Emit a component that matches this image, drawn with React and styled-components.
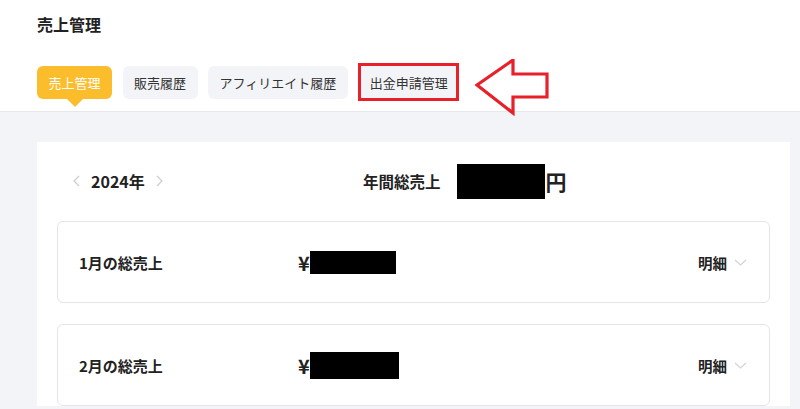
import React from 'react'
import styled, { createGlobalStyle } from 'styled-components'

const GlobalStyle = createGlobalStyle`
  html, body {
    margin: 0;
    padding: 0;
    background: #f3f4f8;
    font-family: "Noto Sans CJK JP", "Noto Sans", sans-serif;
    color: #222;
  }
  * { box-sizing: border-box; }
`

const tabs = ['売上管理', '販売履歴', 'アフィリエイト履歴', '出金申請管理']
const months = ['1月の総売上', '2月の総売上']

function ArrowMark() {
  return (
    <svg width="76" height="58" viewBox="0 0 76 58">
      <polygon
        points="2,26 38,1 38,15 72,15 72,38 38,38 38,54"
        fill="none"
        stroke="#e8202a"
        strokeWidth="3.2"
        strokeLinejoin="miter"
      />
    </svg>
  )
}

function Chevron({ dir }) {
  const pts = dir === 'left' ? '6,1 1,6 6,11' : '1,1 6,6 1,11'
  return (
    <svg width="7" height="12" viewBox="0 0 7 12">
      <polyline points={pts} fill="none" stroke="#c9cdd4" strokeWidth="1.2" />
    </svg>
  )
}

function App() {
  return (
    <>
      <GlobalStyle />
      <Header>
        <PageTitle>売上管理</PageTitle>
        <TabRow>
          {tabs.map((t, i) => (
            <Tab key={t} active={i === 0} marked={i === 3}>{t}</Tab>
          ))}
          <ArrowWrap><ArrowMark /></ArrowWrap>
        </TabRow>
      </Header>
      <Body>
        <Panel>
          <YearRow>
            <YearNav>
              <Chevron dir="left" />
              <YearLabel>2024年</YearLabel>
              <Chevron dir="right" />
            </YearNav>
            <Total>
              <TotalLabel>年間総売上</TotalLabel>
              <Redact w={88} h={35} />
              <Yen>円</Yen>
            </Total>
          </YearRow>
          {months.map((m, i) => (
            <MonthCard key={m}>
              <MonthLabel>{m}</MonthLabel>
              <Amount>
                <span>¥</span>
                <Redact w={i === 0 ? 86 : 89} h={i === 0 ? 23 : 27} />
              </Amount>
              <Detail>
                明細
                <svg width="13" height="7" viewBox="0 0 13 7">
                  <polyline points="1,1 6.5,6 12,1" fill="none" stroke="#cfd3da" strokeWidth="1.2" />
                </svg>
              </Detail>
            </MonthCard>
          ))}
        </Panel>
      </Body>
    </>
  )
}

const Header = styled.header`
  background: #fff;
  padding: 14px 37px 0;
  border-bottom: 1px solid #e6e7eb;
`

const PageTitle = styled.h1`
  margin: 0;
  font-size: 16px;
  line-height: 20px;
  font-weight: 700;
  color: #222;
`

const TabRow = styled.div`
  display: flex;
  align-items: center;
  gap: 10.5px;
  margin-top: 32px;
  padding-bottom: 12px;
`

const Tab = styled.div`
  position: relative;
  height: 33px;
  padding: 0 11.5px;
  display: flex;
  align-items: center;
  font-size: 13px;
  border-radius: 6px;
  background: ${p => (p.active ? '#fbbd2c' : '#f3f4f8')};
  color: ${p => (p.active ? '#fff' : '#333')};

  &::before {
    content: '';
    display: ${p => (p.active ? 'block' : 'none')};
    position: absolute;
    left: 50%;
    bottom: -8px;
    margin-left: -8px;
    border-left: 8px solid transparent;
    border-right: 8px solid transparent;
    border-top: 8px solid #fbbd2c;
  }

  &::after {
    content: '';
    display: ${p => (p.marked ? 'block' : 'none')};
    position: absolute;
    inset: -3px 0 -2px 0;
    border: 3.5px solid #e8202a;
  }
`

const ArrowWrap = styled.div`
  display: flex;
  margin-left: 5px;
  margin-top: -7px;
  margin-bottom: -18px;
`

const Body = styled.main`
  padding: 30px 10px 0 37px;
`

const Panel = styled.section`
  background: #fff;
  padding: 20px 20px 0;
  display: flex;
  flex-direction: column;
  gap: 21px;
`

const YearRow = styled.div`
  display: flex;
  align-items: center;
  height: 38px;
`

const YearNav = styled.div`
  width: 306px;
  padding-left: 16px;
  display: flex;
  align-items: center;
  gap: 11px;
`

const YearLabel = styled.span`
  font-size: 16px;
  font-weight: 700;
  color: #222;
`

const Total = styled.div`
  display: flex;
  align-items: center;
`

const TotalLabel = styled.span`
  font-size: 15.5px;
  font-weight: 700;
  margin-right: 16px;
`

const Yen = styled.span`
  font-size: 21px;
  font-weight: 700;
  margin-left: 1px;
`

const Redact = styled.span`
  display: inline-block;
  width: ${p => p.w}px;
  height: ${p => p.h}px;
  background: #000;
`

const MonthCard = styled.div`
  height: 82px;
  flex-shrink: 0;
  border: 1px solid #e4e5e9;
  border-radius: 6px;
  padding: 0 22px 0 21px;
  display: grid;
  grid-template-columns: 219px 1fr auto;
  align-items: center;
`

const MonthLabel = styled.span`
  font-size: 15px;
  font-weight: 700;
`

const Amount = styled.div`
  display: flex;
  align-items: center;
  font-size: 20px;
  font-weight: 700;
`

const Detail = styled.div`
  display: flex;
  align-items: center;
  gap: 7px;
  font-size: 14.5px;
  font-weight: 700;
`

export default App
